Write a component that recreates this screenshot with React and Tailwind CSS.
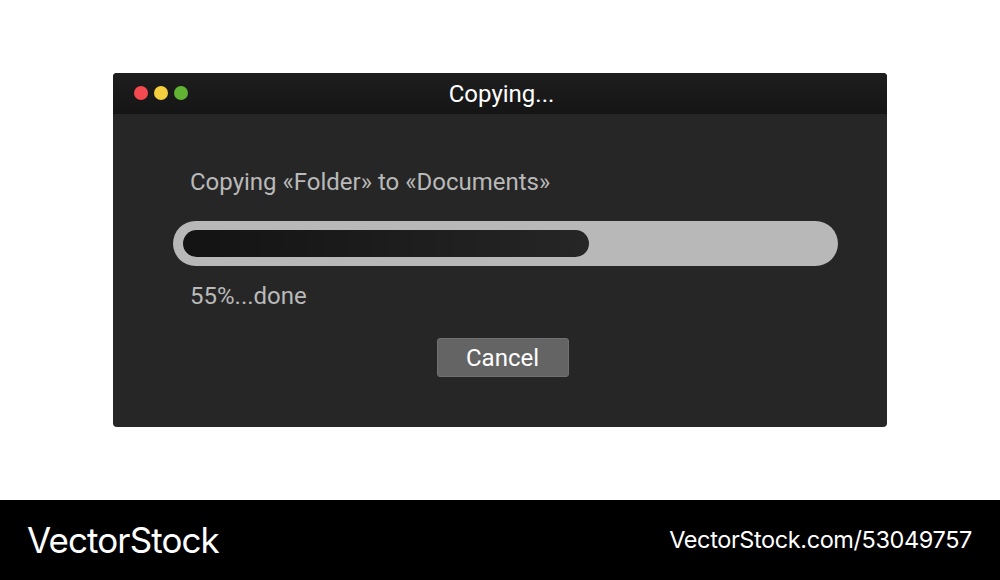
export default function App() {
  return (
    <div className="w-[1000px] h-[580px] flex flex-col bg-white font-['Roboto',sans-serif]">
      <div className="h-[500px] flex justify-center pt-[73px]">
        <div className="w-[774px] h-[354px] rounded-[4px] overflow-hidden bg-[#262626] flex flex-col">
          <div className="relative h-[41px] shrink-0 bg-gradient-to-b from-[#1e1e1e] to-[#151515] flex items-center justify-center">
            <div className="absolute left-[21px] top-[13px] flex gap-[6px]">
              <span className="w-[14px] h-[14px] rounded-full bg-[#f24a50]" />
              <span className="w-[14px] h-[14px] rounded-full bg-[#f5cf3e]" />
              <span className="w-[14px] h-[14px] rounded-full bg-[#62b334]" />
            </div>
            <span className="text-white text-[24px] leading-none pl-[3px]">Copying...</span>
          </div>
          <div className="flex flex-col px-[60px]">
            <p className="pl-[17px] mt-[54px] text-[#b9b9b9] text-[24px] leading-[28px]">
              Copying «Folder» to «Documents»
            </p>
            <div className="mt-[25px] w-[665px] h-[45px] rounded-full bg-[#b8b8b8] flex items-center px-[10px]">
              <div className="w-[406px] h-[27px] rounded-full bg-gradient-to-r from-[#131313] to-[#262626]" />
            </div>
            <p className="pl-[17px] mt-[16px] text-[#b9b9b9] text-[24px] leading-[28px]">55%...done</p>
            <div className="flex justify-center mt-[28px] pl-[5px]">
              <button className="w-[132px] h-[39px] rounded-[3px] bg-[#646464] border border-[#707070] text-white text-[24px] leading-none">
                Cancel
              </button>
            </div>
          </div>
        </div>
      </div>
      <div className="h-[80px] bg-black flex items-center justify-between pl-[27px] pr-[28px] font-['Inter',sans-serif] text-white">
        <span className="text-[35px] tracking-[-0.9px] leading-none">VectorStock</span>
        <span className="text-[23.5px] tracking-[-0.4px] leading-none">VectorStock.com/53049757</span>
      </div>
    </div>
  );
}
